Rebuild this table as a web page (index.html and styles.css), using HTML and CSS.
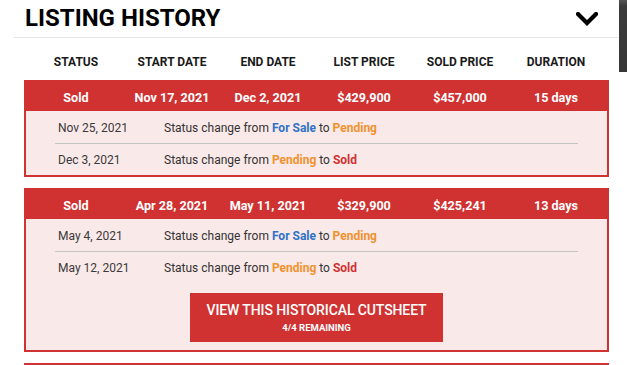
FILE: index.html
```html
<!DOCTYPE html>
<html>
<head>
<meta charset="utf-8">
<link rel="stylesheet" href="styles.css">
</head>
<body>
<div class="edge"></div>
<div class="wrap">
  <div class="head">
    <h2 class="title">LISTING HISTORY</h2>
    <svg class="chev" width="22" height="14" viewBox="0 0 22 14"><polyline points="2,2 11,11 20,2" fill="none" stroke="#000" stroke-width="4.2" stroke-linecap="square"/></svg>
  </div>
  <div class="cols">
    <div>STATUS</div><div>START DATE</div><div>END DATE</div><div>LIST PRICE</div><div>SOLD PRICE</div><div>DURATION</div>
  </div>

  <div class="box">
    <div class="sum">
      <div>Sold</div><div>Nov 17, 2021</div><div>Dec 2, 2021</div><div>$429,900</div><div>$457,000</div><div>15 days</div>
    </div>
    <div class="details">
      <div class="drow"><span class="date">Nov 25, 2021</span><span>Status change from <b class="sale">For Sale</b> to <b class="pend">Pending</b></span></div>
      <div class="drow"><span class="date">Dec 3, 2021</span><span>Status change from <b class="pend">Pending</b> to <b class="sold">Sold</b></span></div>
    </div>
  </div>

  <div class="box">
    <div class="sum">
      <div>Sold</div><div>Apr 28, 2021</div><div>May 11, 2021</div><div>$329,900</div><div>$425,241</div><div>13 days</div>
    </div>
    <div class="details">
      <div class="drow"><span class="date">May 4, 2021</span><span>Status change from <b class="sale">For Sale</b> to <b class="pend">Pending</b></span></div>
      <div class="drow"><span class="date">May 12, 2021</span><span>Status change from <b class="pend">Pending</b> to <b class="sold">Sold</b></span></div>
    </div>
    <div class="btnwrap">
      <a class="btn"><span class="btn-main">VIEW THIS HISTORICAL CUTSHEET</span><span class="btn-sub">4/4 REMAINING</span></a>
    </div>
  </div>
  <div class="box last"></div>
</div>
</body>
</html>
```
FILE: styles.css
```css
* { box-sizing: border-box; }
body {
  margin: 0;
  background: #fff;
  font-family: Roboto, "Liberation Sans", Arial, sans-serif;
  color: #333;
  position: relative;
  height: 365px;
  overflow: hidden;
}
.edge {
  position: absolute;
  left: 619px;
  top: 0;
  width: 8px;
  height: 72px;
  background: linear-gradient(#555 0, #3b3b3b 6px, #363636 100%);
}
.wrap {
  margin-left: 14px;
  width: 604px;
}
.head {
  height: 38px;
  display: flex;
  align-items: center;
  justify-content: space-between;
  padding: 0 20px 2px 11px;
  border-bottom: 1px solid #e4e4e4;
}
.title {
  margin: 0;
  font-size: 24px;
  font-weight: 700;
  color: #000;
  line-height: 1;
}
.chev { display: block; margin-top: 2px; }
.cols, .sum {
  display: grid;
  grid-template-columns: repeat(6, 1fr);
  text-align: center;
  align-items: center;
}
.cols {
  margin: 0 9px 0 10px;
  padding: 6px 5px 0 4px;
  height: 42px;
  font-size: 12px;
  font-weight: 700;
  color: #1a1a1a;
}
.box {
  margin: 0 9px 11px 10px;
  border: 2px solid #d03131;
  background: #fae9e9;
}
.sum {
  background: #d03131;
  color: #fff;
  font-size: 12.6px;
  font-weight: 700;
  height: 29px;
  padding: 1px 3px 0 2px;
}
.details { padding: 0 29px; }
.drow {
  display: flex;
  align-items: center;
  height: 32px;
  padding: 1px 0 0 3px;
  font-size: 12px;
  color: #333;
}
.drow + .drow { border-top: 1px solid #c4c4c4; }
.date { width: 106px; color: #3a3a3a; }
.drow b { font-weight: 700; }
.sale { color: #2f73c6; }
.pend { color: #f0922e; }
.sold { color: #d03131; }
.btnwrap {
  display: flex;
  justify-content: center;
  padding: 10px 0 8px;
}
.btn {
  width: 253px;
  height: 49px;
  background: #d03131;
  color: #fff;
  display: flex;
  flex-direction: column;
  align-items: center;
  justify-content: center;
  text-decoration: none;
}
.btn-main { font-size: 14px; font-weight: 500; line-height: 17px; letter-spacing: -0.1px; }
.btn-sub { font-size: 9.5px; font-weight: 700; line-height: 12px; margin-top: 3px; }
.box.last {
  border-width: 2px 0 0 0;
  height: 2px;
  background: transparent;
  margin-bottom: 0;
}
```
